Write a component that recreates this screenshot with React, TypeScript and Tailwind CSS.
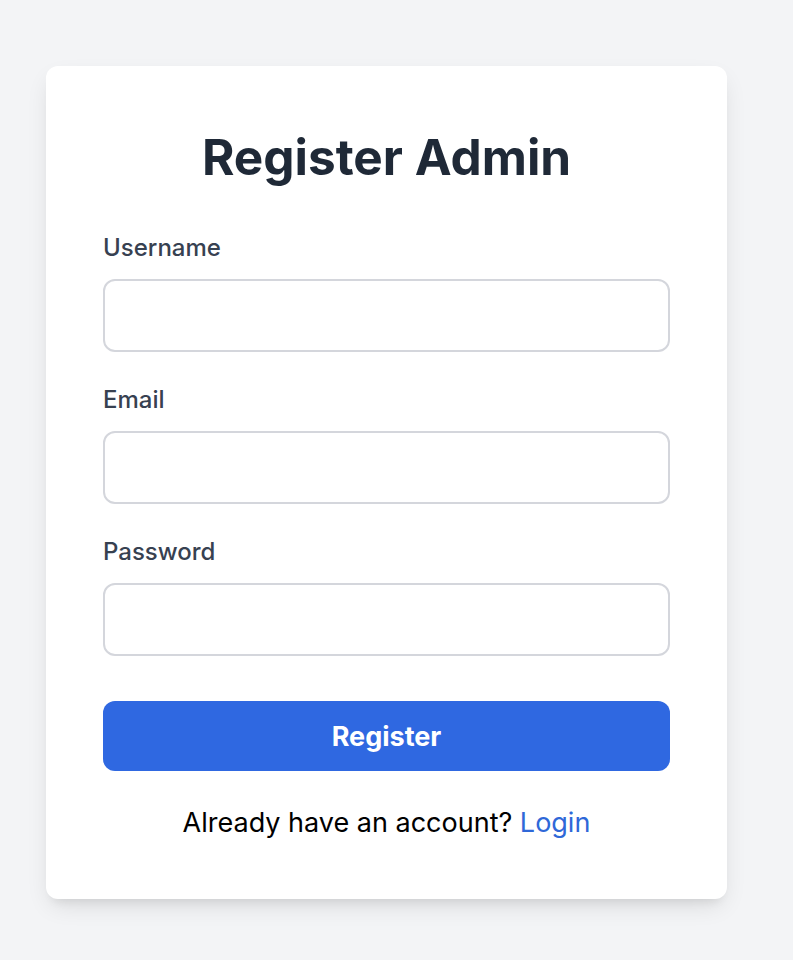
import React from 'react';

function Field({ label, type }: { label: string; type: string }) {
    return (
        <div className="flex flex-col">
            <label className="text-[24px] leading-[33px] font-medium text-[#374151] mb-[15px]">
                {label}
            </label>
            <input
                type={type}
                className="h-[73px] w-full rounded-[12px] border-2 border-[#d4d6dc] bg-white px-4 outline-none"
            />
        </div>
    );
}

function App() {
    return (
        <div
            className="min-h-[960px] w-full bg-[#f3f4f6] pt-[66px] pl-[46px]"
            style={{ fontFamily: 'Inter, "Noto Sans", sans-serif' }}
        >
            <div className="w-[681px] h-[833px] rounded-[12px] bg-white shadow-[0_10px_25px_-5px_rgba(0,0,0,0.12),0_8px_10px_-6px_rgba(0,0,0,0.08)] px-[57px] pt-[61px]">
                <h1 className="text-center text-[49.5px] leading-[60px] font-bold text-[#1f2937] mb-[44px]">
                    Register Admin
                </h1>

                <div className="flex flex-col gap-[31px]">
                    <Field label="Username" type="text" />
                    <Field label="Email" type="email" />
                    <Field label="Password" type="password" />
                </div>

                <button className="mt-[45px] h-[70px] w-full rounded-[12px] bg-[#2f68e1] pt-[2px] text-[27px] font-bold text-white">
                    Register
                </button>

                <p className="mt-[35px] text-center text-[27px] leading-[34px] text-black">
                    Already have an account?{' '}
                    <a href="#" className="text-[#2f68d8]">
                        Login
                    </a>
                </p>
            </div>
        </div>
    );
}

export default App;
